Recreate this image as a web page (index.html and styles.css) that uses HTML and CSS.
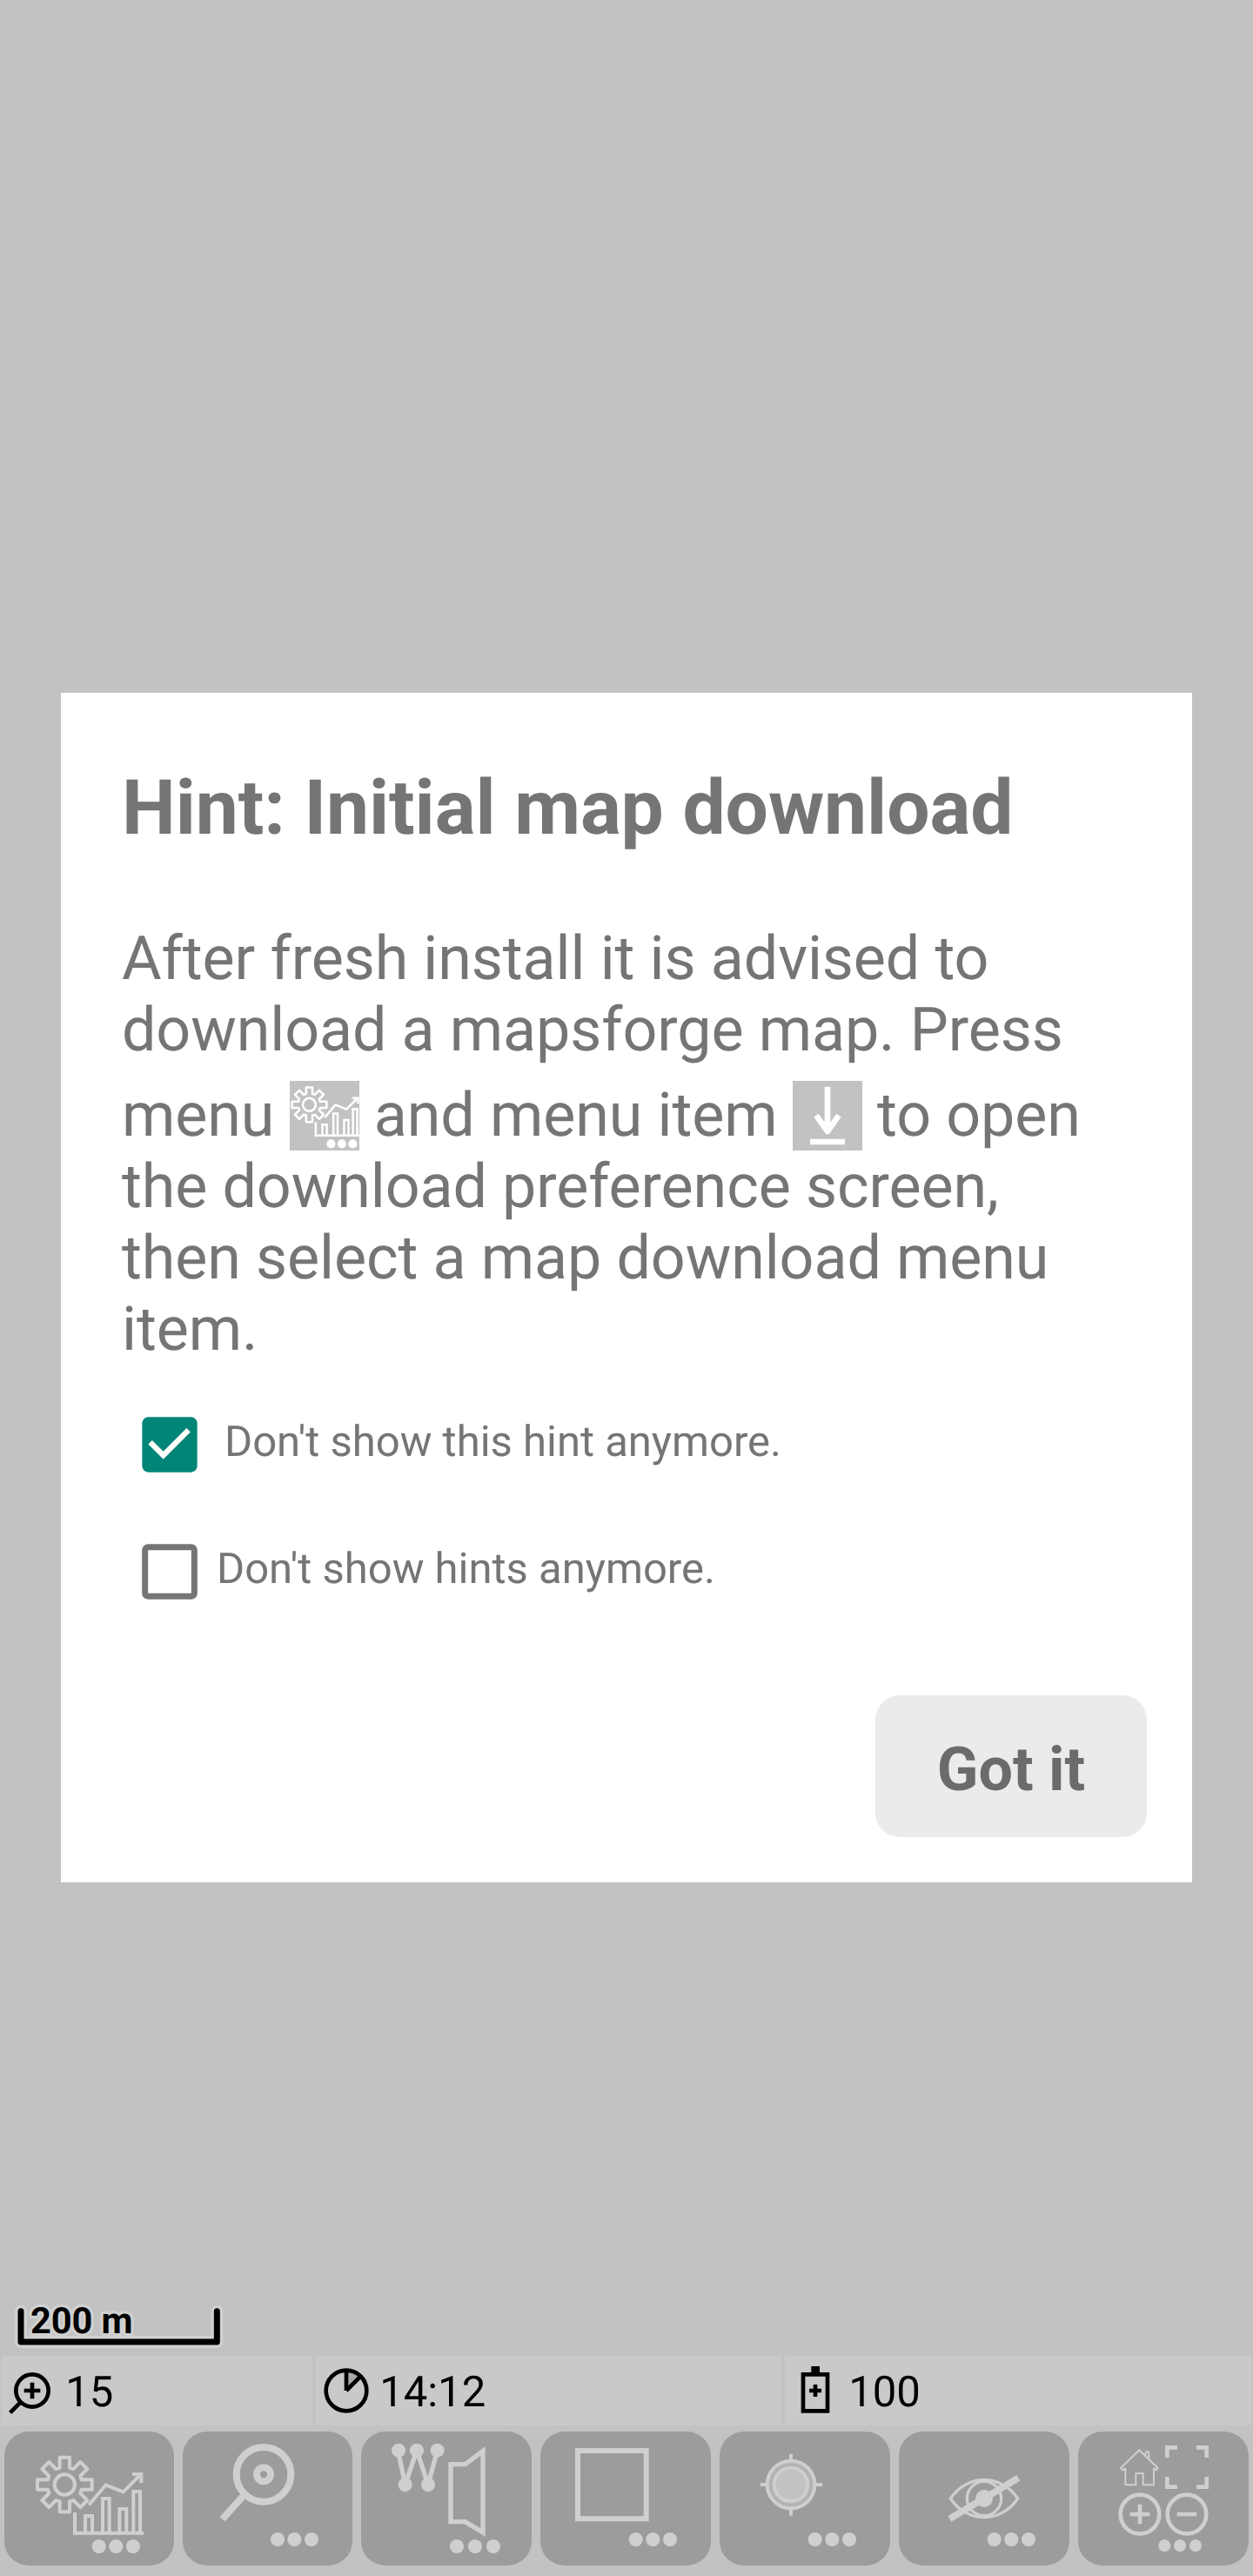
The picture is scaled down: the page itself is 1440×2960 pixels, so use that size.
FILE: index.html
```
<!DOCTYPE html>
<html lang="en">
<head>
<meta charset="utf-8">
<title>Hint: Initial map download</title>
<link rel="stylesheet" href="styles.css">
</head>
<body>
<svg class="defs" width="0" height="0" aria-hidden="true">
  <symbol id="stats" viewBox="117 576 378 378">
    <g fill="none" stroke="currentColor" stroke-width="12">
      <path stroke-linejoin="round" transform="translate(223 705)" d="M-17-58V-94H17V-58L30-54 54-78 78-54 54-30 58-17H94V17H58L54 30 78 54 54 78 30 54 17 58V94H-17V58L-30 54-54 78-78 54-54 30-58 17H-94V-17H-58L-54-30-78-54-54-78-30-54Z"/>
      <circle cx="223" cy="705" r="35"/>
      <path d="M258 801V872H495M294 872V813H318V872M354 872V753H377V872M412 872V789H436V872M460 872V729H483V872"/>
      <path d="M307 775 365 706 425 730 487 668M456 669H487V699"/>
    </g>
    <g fill="currentColor"><circle cx="341" cy="918" r="24"/><circle cx="400" cy="918" r="24"/><circle cx="459" cy="918" r="24"/></g>
  </symbol>
</svg>
<main class="screen">
  <section class="dialog">
    <h1 class="title">Hint: Initial map download</h1>
    <p class="message">After fresh install it is advised to<br>download a mapsforge map. Press<br>menu <svg class="inline-icon"><use href="#stats"/></svg> and menu item <svg class="inline-icon" viewBox="0 0 240 240"><path d="M120 20V178M81 119 120 174 159 119M60 210H180" fill="none" stroke="currentColor" stroke-width="20" stroke-linejoin="round"/></svg> to open<br>the download preference screen,<br>then select a map download menu<br>item.</p>
    <div class="option option-this">
      <svg class="box" viewBox="0 0 192 192"><rect x="1" y="1" width="190" height="190" rx="21" fill="#018577"/><path d="M29 88 74 133 161 46" fill="none" stroke="#fff" stroke-width="19"/></svg>
      <span>Don't show this hint anymore.</span>
    </div>
    <div class="option option-all">
      <svg class="box" viewBox="0 0 192 192"><rect x="11" y="11" width="170" height="170" rx="11" fill="none" stroke="#757575" stroke-width="21"/></svg>
      <span>Don't show hints anymore.</span>
    </div>
    <button class="confirm">Got it</button>
  </section>

  <div class="scale">
    <svg class="scale-bar" viewBox="48 78 723 162">
      <g fill="none" stroke-linecap="round" stroke-linejoin="round">
        <path d="M72 107V213H748V107" stroke="#d0d0d0" stroke-width="42"/>
        <path d="M72 107V213H748V107" stroke="#000" stroke-width="21"/>
      </g>
      <text class="scale-text" x="105" y="183">200 m</text>
    </svg>
  </div>

  <div class="status">
    <div class="cell"><svg class="status-icon zoom-icon" viewBox="6 261 200 240"><g fill="none" stroke="#000" stroke-width="14"><circle cx="111" cy="381" r="56"/><path d="M35 457 73 419M83 381H139M111 353V409"/></g></svg><span>15</span></div>
    <div class="cell"><svg class="status-icon clock-icon" viewBox="1089 261 200 240"><path d="M1194 381V312A69 69 0 0 1 1243 332Z" fill="#aaa"/><g fill="none" stroke="#000" stroke-width="14"><circle cx="1194" cy="381" r="70"/><path d="M1194 381V311M1194 381 1243 332"/></g></svg><span>14:12</span></div>
    <div class="cell"><svg class="status-icon battery-icon" viewBox="306 21 200 240"><path d="M369 85H453V211H369Z" fill="none" stroke="#000" stroke-width="14"/><path d="M397 57h29v25h-29zM404 120h14v42h-14zM390 134h42v14h-42z"/></svg><span>100</span></div>
  </div>

  <nav class="toolbar">
    <div class="tool"><svg viewBox="15 522 585 462"><use href="#stats" x="117" y="576" width="378" height="378"/></svg></div>
    <div class="tool"><svg viewBox="630 522 585 462"><g fill="none" stroke="currentColor" stroke-width="24"><circle cx="909" cy="670" r="94"/><circle cx="909" cy="670" r="24"/><path d="M767 824 840 742"/></g><g fill="currentColor"><circle cx="957" cy="894" r="24"/><circle cx="1015" cy="894" r="24"/><circle cx="1074" cy="894" r="24"/></g></svg></div>
    <div class="tool"><svg viewBox="45 282 588 462"><g fill="none" stroke="currentColor" stroke-width="16"><path d="M172 347 197 465 237 347 276 465 308 347"/><path d="M354 395H404L465 349V630L404 593H354Z"/></g><g fill="currentColor"><circle cx="174" cy="347" r="24"/><circle cx="237" cy="347" r="24"/><circle cx="308" cy="347" r="24"/><circle cx="197" cy="465" r="24"/><circle cx="276" cy="465" r="24"/><circle cx="375" cy="678" r="24"/><circle cx="438" cy="678" r="24"/><circle cx="501" cy="678" r="24"/></g></svg></div>
    <div class="tool"><svg viewBox="663 282 588 462"><path d="M792 348H1028V583H792Z" fill="none" stroke="currentColor" stroke-width="18"/><g fill="currentColor"><circle cx="992" cy="654" r="24"/><circle cx="1051" cy="654" r="24"/><circle cx="1110" cy="654" r="24"/></g></svg></div>
    <div class="tool"><svg viewBox="81 282 588 462"><g stroke="currentColor" stroke-width="12"><path d="M327 359V380M327 550V572M221 465H242M412 465H435"/><circle cx="327" cy="465" r="82" fill="#b3b3b3"/><circle cx="327" cy="465" r="58" fill="#c2c2c2"/></g><g fill="currentColor"><circle cx="410" cy="654" r="24"/><circle cx="469" cy="654" r="24"/><circle cx="528" cy="654" r="24"/></g></svg></div>
    <div class="tool"><svg viewBox="-201 282 588 462"><g fill="none" stroke="currentColor" stroke-width="10"><path d="M-23 513C35 427 151 427 209 513C151 599 35 599-23 513Z"/><circle cx="93" cy="513" r="59"/><path d="M-26 583 211 442" stroke-width="23"/></g><g fill="currentColor"><circle cx="93" cy="513" r="30"/><circle cx="128" cy="654" r="24"/><circle cx="187" cy="654" r="24"/><circle cx="246" cy="654" r="24"/></g></svg></div>
    <div class="tool"><svg viewBox="417 282 588 462"><g fill="none" stroke="currentColor"><path stroke-width="6" stroke-linejoin="round" d="M580 408V466H616V426H641V466H678V408M580 408 572 416 564 408 628 346 692 408 686 415 678 408M650 364V354Q655 348 661 354V376"/><g stroke-width="14"><circle cx="630" cy="567" r="67"/><circle cx="792" cy="567" r="67"/><path d="M596 567H664M630 533V601M758 567H826M724 372V337H759M825 337H860V372M724 438V473H759M825 473H860V438"/></g></g><g fill="currentColor"><circle cx="715" cy="675" r="21"/><circle cx="768" cy="675" r="21"/><circle cx="822" cy="675" r="21"/></g></svg></div>
  </nav>
</main>
</body>
</html>
```
FILE: styles.css
```
body { margin: 0; background: #c2c2c2; font-family: Roboto, sans-serif; text-rendering: geometricPrecision; }
svg { display: block; }
.defs { position: absolute; }
.screen { display: flex; flex-direction: column; height: 2960px; box-sizing: border-box; padding-top: 796px; }

.dialog { display: flex; flex-direction: column; flex: none; box-sizing: border-box; width: 1300px; height: 1367px; margin: 0 70px; padding: 82px 52px 52px 70px; background: #fff; color: #757575; }
.title { margin: 0; font-size: 87.5px; line-height: 103px; font-weight: 700; letter-spacing: -0.08px; white-space: nowrap; }
.message { margin: 80px 0 0; font-size: 70px; line-height: 82px; letter-spacing: -0.11px; white-space: nowrap; }
.inline-icon { display: inline-block; width: 80px; height: 80px; margin-top: 17px; vertical-align: -17px; background: #c2c2c2; color: #fff; }
.option { display: flex; align-items: center; height: 64px; margin-left: 23px; font-size: 49px; white-space: nowrap; }
.option-this { gap: 31px; margin-top: 59px; }
.option-all { gap: 22px; margin-top: 82px; }
.option span { padding-bottom: 8px; }
.box { width: 64px; height: 64px; }
.confirm { width: 312px; height: 163px; margin: auto 0 0 auto; padding: 6px 0 0; border: 0; border-radius: 28px; background: #ebebeb; color: #6b6b6b; font: 700 70px Roboto, sans-serif; }

.scale { margin-top: auto; padding: 0 16px 7px; }
.scale-bar { width: 241px; height: 54px; overflow: visible; }
.scale-text { font-size: 125px; font-weight: 700; letter-spacing: -0.5px; stroke: #d0d0d0; stroke-width: 20px; stroke-linejoin: round; paint-order: stroke; }

.status { display: grid; grid-template-columns: 357px 535px 536px; gap: 4px; margin: 0 2px; height: 80px; }
.cell { display: flex; align-items: center; background: #c9c9c9; color: #000; font-size: 49px; }
.status-icon { width: 66.67px; height: 80px; }
.cell span { margin-left: 6.5px; padding-top: 2px; }

.toolbar { display: grid; grid-template-columns: 205px 205px repeat(5, 206px); height: 154px; padding: 7px 0 12px; }
.tool { margin: 0 5px; border-radius: 28px; background: #9c9c9c; color: #cfcfcf; }
.tool svg { width: 100%; height: 154px; }
```
